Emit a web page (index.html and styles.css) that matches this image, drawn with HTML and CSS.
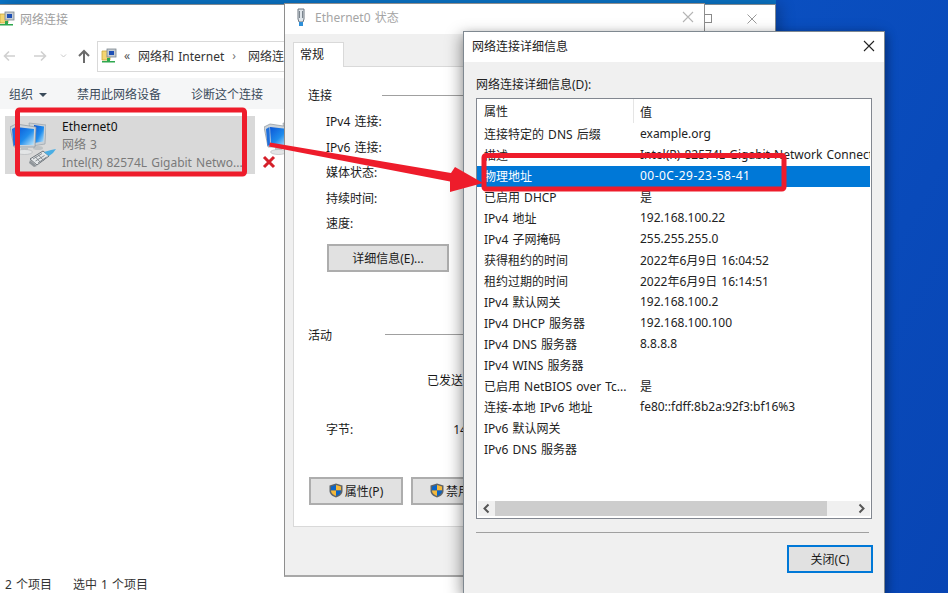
FILE: index.html
```html
<!DOCTYPE html>
<html lang="zh-CN">
<head>
<meta charset="utf-8">
<title>网络连接详细信息</title>
<link rel="stylesheet" href="styles.css">
</head>
<body>
<svg class="defs" width="0" height="0" aria-hidden="true">
  <defs>
    <linearGradient id="scr" x1="0" y1="0" x2="1" y2="1"><stop offset="0" stop-color="#0a55d6"/><stop offset=".55" stop-color="#1f8cec"/><stop offset="1" stop-color="#bfe8fc"/></linearGradient>
    <symbol id="pc" viewBox="0 0 36 40">
      <path d="M19 2 36 4 35 23 22 25Z" fill="#c9d0d6" stroke="#9aa2a9" stroke-width=".7"/>
      <path d="M24 4 34 5.500 33.500 20.500 24 22Z" fill="url(#scr)"/>
      <ellipse cx="28" cy="27" rx="5" ry="2" fill="#bfc3c5"/>
      <path d="M0 6 6 3 26 6 25 26 4 26Z" fill="#ccd3d9" stroke="#8c959d" stroke-width=".7"/>
      <path d="M6 6 24 8 23.500 24 7 24Z" fill="url(#scr)"/>
      <path d="M2 8 5.500 6 6 24 3.500 25Z" fill="#1e6fdc"/>
      <rect x="11" y="26" width="7" height="3" fill="#bcc1c4"/>
      <ellipse cx="14.500" cy="31" rx="8" ry="2.500" fill="#e3e5e6" stroke="#b0b4b7" stroke-width=".6"/>
    </symbol>
    <symbol id="plug" viewBox="0 0 27 18">
      <path d="M1 10 14 2 20 7 8 16Z" fill="#e4e7e9" stroke="#6f767c" stroke-width="1"/>
      <path d="M4 10 13 4.500M6.500 12 15.500 6.500M9 14 17.500 8M6 7.500 12 14M9 5.500 15 12" stroke="#7d8389" stroke-width=".9"/>
      <path d="M15 3 22 1 27 0 24 4 20 7Z" fill="#4aaee4"/>
      <path d="M1 11 8 17 5 18 0 14Z" fill="#8f959a"/>
    </symbol>
    <symbol id="netfolder" viewBox="0 0 16 16">
      <path d="M1 3h7l1 1v8H1Z" fill="#f3d572" stroke="#c9a63a" stroke-width=".8"/>
      <rect x="6" y="1" width="9" height="8" fill="#c5ccd3" stroke="#7c858d" stroke-width=".8"/>
      <rect x="8" y="3" width="5" height="4" fill="#1d4fb5"/>
      <rect x="6" y="10" width="3" height="3" fill="#2fa84f"/>
      <rect x="1" y="13" width="13" height="1.500" fill="#2fa84f"/>
    </symbol>
    <symbol id="shield" viewBox="0 0 14 15">
      <path d="M7 .5 13.500 2.500V8C13.500 11.500 10 13.500 7 14.500 4 13.500 .5 11.500 .5 8V2.500Z" fill="#5f6468"/>
      <path d="M7 2 12 3.500V7.500H7Z" fill="#f4b83a"/>
      <path d="M7 2V7.500H2V3.500Z" fill="#0b63c4"/>
      <path d="M2 7.500H7V13C4.500 12 2 10.500 2 7.500Z" fill="#f4b83a"/>
      <path d="M7 7.500H12C12 10.500 9.500 12 7 13Z" fill="#0b63c4"/>
    </symbol>
  </defs>
</svg>

<div class="desktop">
  <div class="topstrip"></div>

  <section class="window explorer">
    <header class="ex-title">
      <svg class="ico16" aria-hidden="true"><use href="#netfolder"/></svg>
      <span>网络连接</span>
      <div class="ex-controls">
        <svg width="9" height="9" viewBox="0 0 9 9" aria-hidden="true"><rect x=".5" y=".5" width="8" height="8" fill="none" stroke="#8a8a8a"/></svg>
        <svg width="10" height="10" viewBox="0 0 10 10" aria-hidden="true"><path d="M.5 .5 9.500 9.500M9.500 .5 .5 9.500" stroke="#9a9a9a"/></svg>
      </div>
    </header>
    <div class="ex-nav">
      <svg class="nav-icons" width="90" height="16" viewBox="0 0 90 16" aria-hidden="true">
        <path d="M15 8H5M9 3.500 4.500 8 9 12.500" fill="none" stroke="#d0d0d0" stroke-width="1.600"/>
        <path d="M34 8H45M41 3.500 45.500 8 41 12.500" fill="none" stroke="#d0d0d0" stroke-width="1.600"/>
        <path d="M61 6.500 63.500 9 66 6.500" fill="none" stroke="#c9c9c9" stroke-width="1"/>
        <path d="M84 15V3M79 8 84 3 89 8" fill="none" stroke="#6b6b6b" stroke-width="2"/>
      </svg>
      <div class="address">
        <svg class="ico16" aria-hidden="true"><use href="#netfolder"/></svg>
        <span class="crumb-mark">«</span>
        <span>网络和 Internet</span>
        <span class="crumb-sep">›</span>
        <span class="crumb-last">网络连接</span>
      </div>
    </div>
    <div class="ex-toolbar">
      <span>组织<i class="caret"></i></span>
      <span>禁用此网络设备</span>
      <span>诊断这个连接</span>
    </div>
    <div class="ex-list">
      <div class="conn selected">
        <div class="conn-icon">
          <svg class="pc" aria-hidden="true"><use href="#pc"/></svg>
          <svg class="plug" aria-hidden="true"><use href="#plug"/></svg>
        </div>
        <div class="conn-text">
          <div class="conn-name">Ethernet0</div>
          <div class="conn-sub">网络 3</div>
          <div class="conn-sub">Intel(R) 82574L Gigabit Netwo...</div>
        </div>
      </div>
      <div class="conn second">
        <div class="conn-icon">
          <svg class="pc" aria-hidden="true"><use href="#pc"/></svg>
          <svg class="redx" width="14" height="14" viewBox="0 0 14 14" aria-hidden="true"><path d="M2 2 12 12M12 2 2 12" stroke="#d5202a" stroke-width="3"/></svg>
        </div>
      </div>
    </div>
    <footer class="ex-status"><span>2 个项目</span><span>选中 1 个项目</span></footer>
  </section>

  <section class="window status">
    <header class="dlg-title status-title">
      <svg class="eth" width="10" height="19" viewBox="0 0 10 19" aria-hidden="true"><path d="M2 1H8V11L7 14H3L2 11Z" fill="#dfe5ea" stroke="#6d7780"/><path d="M3.500 3V10M6.500 3V10" stroke="#7b858e"/><path d="M3 14H7V18H3Z" fill="#2e8fd8"/></svg>
      <span>Ethernet0 状态</span>
      <svg class="x-icon" width="12" height="12" viewBox="0 0 12 12" aria-hidden="true"><path d="M1 1 11 11M11 1 1 11" stroke="#b5b5b5" stroke-width="1.100"/></svg>
    </header>
    <div class="status-body">
      <div class="tab">常规</div>
      <div class="panel">
        <div class="group-head conn-head"><span>连接</span><i></i></div>
        <dl class="facts">
          <dt>IPv4 连接:</dt>
          <dt>IPv6 连接:</dt>
          <dt>媒体状态:</dt>
          <dt>持续时间:</dt>
          <dt>速度:</dt>
        </dl>
        <button class="btn detail-btn">详细信息(E)...</button>
        <div class="group-head act-head"><span>活动</span><i></i></div>
        <div class="sent">已发送</div>
        <div class="bytes"><span>字节:</span><span>14</span></div>
        <div class="panel-btns">
          <button class="btn shield-btn"><svg class="shield" aria-hidden="true"><use href="#shield"/></svg>属性(P)</button>
          <button class="btn shield-btn"><svg class="shield" aria-hidden="true"><use href="#shield"/></svg>禁用(D)</button>
        </div>
      </div>
    </div>
  </section>

  <section class="window details">
    <header class="dlg-title details-title">
      <span>网络连接详细信息</span>
      <svg class="x-icon" width="12" height="12" viewBox="0 0 12 12" aria-hidden="true"><path d="M1 1 11 11M11 1 1 11" stroke="#222" stroke-width="1.100"/></svg>
    </header>
    <div class="details-body">
      <div class="list-label">网络连接详细信息(D):</div>
      <div class="listbox">
        <div class="row head"><span class="c1">属性</span><span class="c2">值</span></div>
        <div class="rows">
          <div class="row"><span class="c1">连接特定的 DNS 后缀</span><span class="c2">example.org</span></div>
          <div class="row"><span class="c1">描述</span><span class="c2">Intel(R) 82574L Gigabit Network Connection</span></div>
          <div class="row sel"><span class="c1">物理地址</span><span class="c2 mac">00-0C-29-23-58-41</span></div>
          <div class="row"><span class="c1">已启用 DHCP</span><span class="c2">是</span></div>
          <div class="row"><span class="c1">IPv4 地址</span><span class="c2">192.168.100.22</span></div>
          <div class="row"><span class="c1">IPv4 子网掩码</span><span class="c2">255.255.255.0</span></div>
          <div class="row"><span class="c1">获得租约的时间</span><span class="c2">2022年6月9日 16:04:52</span></div>
          <div class="row"><span class="c1">租约过期的时间</span><span class="c2">2022年6月9日 16:14:51</span></div>
          <div class="row"><span class="c1">IPv4 默认网关</span><span class="c2">192.168.100.2</span></div>
          <div class="row"><span class="c1">IPv4 DHCP 服务器</span><span class="c2">192.168.100.100</span></div>
          <div class="row"><span class="c1">IPv4 DNS 服务器</span><span class="c2">8.8.8.8</span></div>
          <div class="row"><span class="c1">IPv4 WINS 服务器</span><span class="c2"></span></div>
          <div class="row"><span class="c1">已启用 NetBIOS over Tc...</span><span class="c2">是</span></div>
          <div class="row"><span class="c1">连接-本地 IPv6 地址</span><span class="c2">fe80::fdff:8b2a:92f3:bf16%3</span></div>
          <div class="row"><span class="c1">IPv6 默认网关</span><span class="c2"></span></div>
          <div class="row"><span class="c1">IPv6 DNS 服务器</span><span class="c2"></span></div>
        </div>
        <div class="scrollbar">
          <svg width="17" height="15" viewBox="0 0 17 15" aria-hidden="true"><path d="M10.500 3.500 6.500 7.500 10.500 11.500" fill="none" stroke="#555" stroke-width="2"/></svg>
          <div class="track"><div class="thumb"></div></div>
          <svg width="17" height="15" viewBox="0 0 17 15" aria-hidden="true"><path d="M6.500 3.500 10.500 7.500 6.500 11.500" fill="none" stroke="#555" stroke-width="2"/></svg>
        </div>
      </div>
      <hr class="sep">
      <div class="dlg-foot"><button class="btn default-btn">关闭(C)</button></div>
    </div>
  </section>

  <svg class="annot" width="948" height="593" viewBox="0 0 948 593" aria-hidden="true">
    <rect x="17.500" y="110" width="227" height="64" rx="2" fill="none" stroke="#ee1c2b" stroke-width="5"/>
    <rect x="484" y="155.500" width="300" height="33.500" rx="2" fill="none" stroke="#ee1c2b" stroke-width="5"/>
    <path d="M270 142.500 451 173 455 167 483 183 450 192 450 181.500 269 146.500Z" fill="#ee1c2b"/>
  </svg>
</div>
</body>
</html>
```

FILE: styles.css
```css
* { box-sizing: border-box; }
html, body { margin: 0; padding: 0; }
body {
  width: 948px;
  height: 593px;
  overflow: hidden;
  font-family: "Noto Sans", "Noto Sans CJK SC", sans-serif;
  font-size: 12px;
  word-spacing: 1px;
  color: #1a1a1a;
}
.defs { position: absolute; }
.desktop {
  position: relative;
  width: 948px;
  height: 593px;
  overflow: hidden;
  background: linear-gradient(120deg, #0a56c4 0%, #0a4fc0 60%, #0845b4 100%);
}
.topstrip { height: 5px; background: #0a74c6; width: 776px; }
.window { position: absolute; }

/* explorer */
.explorer {
  left: 0; top: 4px; width: 776px; height: 589px;
  background: #fff;
  border-right: 1px solid #7d8790;
  border-top: 1px solid #7d8790;
  display: flex;
  flex-direction: column;
  box-shadow: 4px 0 14px rgba(0,0,0,.25);
}
.ex-title {
  height: 30px;
  display: flex;
  align-items: center;
  gap: 5px;
  color: #a0a0a0;
  padding: 0 18px 3px 0;
}
.ico16 { width: 16px; height: 16px; flex: none; }
.ex-title .ico16 { margin-left: -1px; }
.ex-controls { margin-left: auto; display: flex; align-items: center; gap: 35px; }
.ex-nav {
  height: 43px;
  display: flex;
  align-items: center;
  padding: 0 0 2px 0;
  gap: 7px;
}
.nav-icons { flex: none; }
.address {
  flex: 1;
  height: 31px;
  border: 1px solid #d9d9d9;
  display: flex;
  align-items: center;
  padding: 0 0 1px 3px;
  gap: 8px;
  color: #333;
  white-space: nowrap;
  margin-bottom: -1px;
}
.crumb-mark { color: #555; margin-left: -1px; }
.crumb-sep { color: #777; }
.crumb-last { margin-left: 4px; }
.ex-toolbar {
  height: 31px;
  background: #f5f6f7;
  display: flex;
  align-items: center;
  padding-left: 9px;
  gap: 30px;
  color: #3a4a5a;
}
.caret {
  display: inline-block;
  margin-left: 6px;
  vertical-align: 2px;
  border: 4px solid transparent;
  border-top: 4px solid #3a4a5a;
  border-bottom: 0;
}
.ex-list {
  flex: 1;
  display: flex;
  padding: 7px 0 0 5px;
  gap: 4px;
}
.conn { display: flex; height: 58px; }
.conn.selected { width: 250px; background: #d9d9d9; }
.conn-icon { position: relative; width: 57px; flex: none; }
.pc { position: absolute; left: 5px; top: 5px; width: 36px; height: 40px; }
.plug { position: absolute; left: 24px; top: 33px; width: 27px; height: 18px; }
.redx { position: absolute; left: 3px; top: 39px; }
.conn-text { line-height: 18px; padding-top: 2px; white-space: nowrap; }
.conn-name { color: #111; }
.conn-sub { color: #7a7a7a; }
.ex-status {
  height: 22px;
  display: flex;
  gap: 21px;
  padding: 1px 0 0 5px;
  align-items: center;
  color: #333;
  margin-bottom: -1px;
}

/* dialogs */
.dlg-title { display: flex; align-items: center; background: #fff; position: relative; }
.dlg-title .x-icon { position: absolute; }
.status {
  left: 284px; top: 3px; width: 421px; height: 574px;
  background: #f0f0f0;
  border: 1px solid #8e8e8e;
  border-bottom: 2px solid #a8a8a8;
  display: flex;
  flex-direction: column;
}
.status-title { height: 30px; padding: 0 0 4px 11px; gap: 9px; color: #a5a5a5; flex: none; }
.status-title .x-icon { right: 10px; top: 7px; }
.status-body { flex: 1; padding: 8px 8px 0; display: flex; flex-direction: column; }
.tab {
  width: 51px;
  height: 25px;
  background: #fff;
  border: 1px solid #d9d9d9;
  border-bottom: 0;
  padding-left: 6px;
  line-height: 23px;
  position: relative;
  z-index: 1;
  margin-bottom: -1px;
  flex: none;
}
.panel {
  height: 461px;
  background: #fff;
  border: 1px solid #d9d9d9;
  padding: 0 14px;
  position: relative;
  flex: none;
}
.group-head { display: flex; align-items: center; height: 18px; gap: 50px; }
.group-head i { flex: 1; height: 1px; background: #a0a0a0; }
.conn-head { margin-top: 19px; }
.facts { margin: 5px 0 0 18px; }
.facts dt { height: 25.500px; line-height: 25.500px; }
.detail-btn { margin: 7px 0 0 19px; width: 122px; }
.act-head { margin-top: 54px; gap: 53px; }
.sent { margin: 28px 0 0 119px; height: 18px; line-height: 18px; }
.bytes { display: flex; gap: 100px; margin: 31px 0 0 18px; line-height: 18px; }
.panel-btns { display: flex; gap: 8px; margin: 38px 0 0 1px; white-space: nowrap; }
.btn {
  height: 28px;
  background: #e1e1e1;
  border: 2px solid #adadad;
  font: inherit;
  word-spacing: inherit;
  color: #1a1a1a;
  padding: 0;
  display: flex;
  align-items: center;
  justify-content: center;
}
.shield-btn { width: 94px; gap: 2px; flex: none; }
.shield { width: 14px; height: 15px; }

.details {
  left: 463px; top: 31px; width: 422px; height: 563px;
  background: #f0f0f0;
  border: 1px solid #7f8890;
  display: flex;
  flex-direction: column;
  box-shadow: -3px 4px 14px rgba(0,0,0,.35), 3px 3px 8px rgba(0,0,0,.2);
}
.details-title { height: 30px; padding: 0 0 2px 8px; color: #222; flex: none; }
.details-title .x-icon { right: 9px; top: 8px; }
.details-body { flex: 1; padding: 14px 12px 0; display: flex; flex-direction: column; }
.list-label { height: 18px; line-height: 18px; color: #222; }
.listbox {
  margin-top: 4px;
  height: 421px;
  width: 396px;
  background: #fff;
  border: 1px solid #828790;
  display: flex;
  flex-direction: column;
  padding: 0 1px 2px 0;
}
.row {
  height: 21px;
  display: flex;
  align-items: center;
  padding-bottom: 2px;
  white-space: nowrap;
  overflow: hidden;
  color: #222;
  flex: none;
}
.row.head { height: 24px; padding-bottom: 0; }
.row.head .c1 { height: 24px; line-height: 25px; border-right: 1px solid #e5e5e5; }
.row.head .c2 { padding-top: 1px; }
.c1 { width: 157px; padding-left: 7px; flex: none; }
.c2 { padding-left: 6px; }
.mac { letter-spacing: .47px; }
.row.sel { background: #0078d7; color: #fff; }
.rows { flex: 1; padding-top: 1px; }
.scrollbar { height: 15px; background: #f0f0f0; display: flex; flex: none; margin-left: 1px; }
.track { flex: 1; }
.thumb { width: 332px; height: 15px; background: #cdcdcd; }
.sep {
  margin: 13px 3px 0 0;
  border: 0;
  height: 1px;
  background: #a0a0a0;
  width: 393px;
}
.dlg-foot { display: flex; justify-content: flex-end; margin-top: 12px; width: 397px; }
.default-btn { width: 86px; border-color: #0078d7; }

.annot { position: absolute; left: 0; top: 0; pointer-events: none; }
```
